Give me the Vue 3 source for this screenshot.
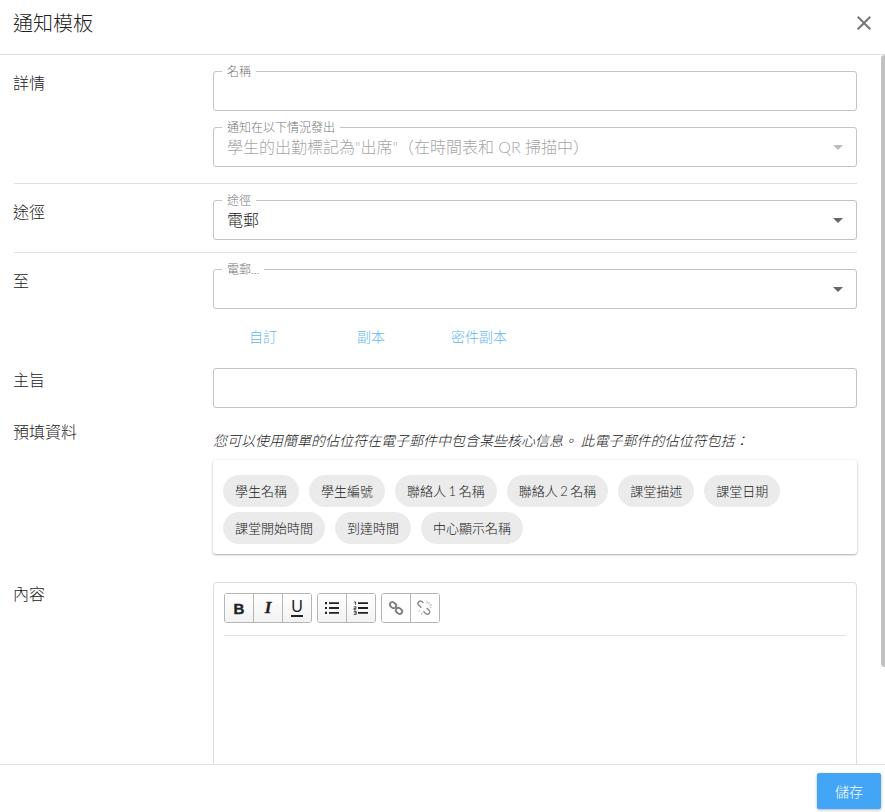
<script setup>
const chips = ['學生名稱', '學生編號', '聯絡人 1 名稱', '聯絡人 2 名稱', '課堂描述', '課堂日期', '課堂開始時間', '到達時間', '中心顯示名稱']
const links = ['自訂', '副本', '密件副本']
</script>

<template>
  <div class="dialog" lang="zh-TW">
    <header class="head">
      <h1>通知模板</h1>
      <svg class="close" width="24" height="24" viewBox="0 0 24 24">
        <path d="M19 6.41 17.59 5 12 10.59 6.41 5 5 6.41 10.59 12 5 17.59 6.41 19 12 13.41 17.59 19 19 17.59 13.41 12z" />
      </svg>
    </header>

    <main class="body">
      <section class="row first has-field">
        <div class="label">詳情</div>
        <div class="col">
          <fieldset class="field">
            <legend>名稱</legend>
          </fieldset>
          <fieldset class="field disabled">
            <legend>通知在以下情況發出</legend>
            <span class="value">學生的出勤標記為"出席"（在時間表和 QR 掃描中）</span>
            <i class="caret"></i>
          </fieldset>
        </div>
      </section>
      <hr />

      <section class="row has-field">
        <div class="label">途徑</div>
        <div class="col">
          <fieldset class="field">
            <legend>途徑</legend>
            <span class="value">電郵</span>
            <i class="caret"></i>
          </fieldset>
        </div>
      </section>
      <hr class="tight" />

      <section class="row has-field">
        <div class="label">至</div>
        <div class="col">
          <fieldset class="field">
            <legend>電郵...</legend>
            <i class="caret"></i>
          </fieldset>
          <div class="links">
            <a v-for="l in links" :key="l">{{ l }}</a>
          </div>
        </div>
      </section>

      <section class="row subject">
        <div class="label">主旨</div>
        <div class="col">
          <div class="plain-input"></div>
        </div>
      </section>

      <section class="row prefill">
        <div class="label">預填資料</div>
        <div class="col">
          <p class="hint">您可以使用簡單的佔位符在電子郵件中包含某些核心信息。 此電子郵件的佔位符包括：</p>
          <div class="card">
            <span v-for="c in chips" :key="c" class="chip">{{ c }}</span>
          </div>
        </div>
      </section>

      <section class="row content">
        <div class="label">內容</div>
        <div class="col">
          <div class="editor">
            <div class="toolbar">
              <div class="group">
                <button class="b">B</button>
                <button class="i">I</button>
                <button class="u"><span>U</span></button>
              </div>
              <div class="group">
                <button>
                  <svg width="16" height="14" viewBox="0 0 16 14">
                    <path d="M5 2.2h10M5 7h10M5 11.8h10" stroke="#222" stroke-width="1.8" />
                    <path d="M1 2.2h2M1 7h2M1 11.8h2" stroke="#222" stroke-width="2.2" />
                  </svg>
                </button>
                <button>
                  <svg width="16" height="14" viewBox="0 0 16 14">
                    <path d="M5 2.2h10M5 7h10M5 11.8h10" stroke="#222" stroke-width="1.8" />
                    <path d="M1 1h1.6v2.8M.8 5.8h2.2v1.6H1v1.4h2.2M.8 10.4h2.4v3H.8M1.4 11.9h1.8" fill="none" stroke="#222" stroke-width=".8" />
                  </svg>
                </button>
              </div>
              <div class="group">
                <button>
                  <svg width="16" height="16" viewBox="0 0 16 16" fill="none" stroke="#7a7a7a" stroke-width="1.8">
                    <rect x="1.6" y="2.6" width="6.8" height="5" rx="2.5" transform="rotate(40 5 5.1)" />
                    <rect x="7.6" y="8.4" width="6.8" height="5" rx="2.5" transform="rotate(40 11 10.9)" />
                  </svg>
                </button>
                <button>
                  <svg width="16" height="16" viewBox="0 0 16 16" fill="none" stroke="#8c8c8c" stroke-width="1.5">
                    <path d="M6.4 2.8 5 1.7a2.4 2.4 0 0 0-3.2 3.6l2.6 2.3" />
                    <path d="M9.6 8.2l2.2 1.8a2.4 2.4 0 0 1-.2 3.8 2.4 2.4 0 0 1-2.9-.3L6.4 11.2" />
                    <path d="M10 1v2.6M12.6 2l-1.4 2M15 5h-2.8M14.4 7.6l-2-.8M3 10.5l-1.6 1M5 12.6 4.4 15" stroke="#b0b0b0" stroke-width=".9" />
                  </svg>
                </button>
              </div>
            </div>
            <div class="area"></div>
          </div>
        </div>
      </section>

      <div class="thumb"></div>
    </main>

    <footer class="foot">
      <button class="save">儲存</button>
    </footer>
  </div>
</template>

<style>
html, body { margin: 0; background: #fff; }
</style>

<style scoped>
.dialog {
  width: 885px;
  height: 812px;
  display: flex;
  flex-direction: column;
  overflow: hidden;
  background: #fff;
  color: #212121;
  font-family: Lato, "Noto Sans CJK TC", sans-serif;
  font-weight: 300;
  text-spacing-trim: space-all;
}

.head {
  height: 55px;
  flex: none;
  display: flex;
  align-items: center;
  justify-content: space-between;
  padding: 0 9px 9px 13px;
  box-sizing: border-box;
  border-bottom: 1px solid #e0e0e0;
}

.head h1 {
  margin: 0;
  font-size: 20px;
  font-weight: 300;
  line-height: 32px;
}

.close {
  fill: #757575;
  width: 24px;
  height: 24px;
}

.body {
  position: relative;
  flex: 1;
  min-height: 0;
  overflow: hidden;
}

.thumb {
  position: absolute;
  top: 0;
  right: 0;
  width: 4px;
  height: 612px;
  background: #c1c1c1;
  border-radius: 4px 0 0 4px;
}

hr {
  margin: 16px 28px 11px 14px;
  border: 0;
  border-top: 1px solid #e0e0e0;
}

hr.tight {
  margin: 12px 28px 11px 14px;
}

.row {
  display: flex;
  padding: 0 28px 0 13px;
}

.row.first {
  padding-top: 11px;
}

.label {
  width: 200px;
  flex: none;
  font-size: 16px;
  line-height: 24px;
}

.has-field .label {
  padding-top: 5px;
}

.col {
  flex: 1;
  min-width: 0;
  display: flex;
  flex-direction: column;
  gap: 11px;
}

.field {
  position: relative;
  margin: 0;
  height: 45px;
  box-sizing: border-box;
  padding: 0 13px;
  border: 1px solid #c4c4c4;
  border-radius: 3px;
  font-size: 16px;
}

.field legend {
  padding: 0 5px;
  margin-left: -5px;
  font-size: 12px;
  line-height: 11px;
  height: 11px;
  color: #757575;
}

.value {
  display: block;
  line-height: 24px;
  margin-top: 2px;
}

.disabled .value {
  color: #a6a6a6;
}

.caret {
  position: absolute;
  right: 13px;
  top: 12px;
  width: 0;
  height: 0;
  border-left: 5px solid transparent;
  border-right: 5px solid transparent;
  border-top: 5px solid #666;
}

.disabled .caret {
  border-top-color: #bdbdbd;
}

.links {
  display: flex;
  height: 36px;
  margin-top: -2px;
  align-items: center;
}

.links a {
  width: 100px;
  text-align: center;
  font-size: 14px;
  color: #64b5f6;
}

.links a:nth-child(2) {
  margin-left: 8px;
}

.links a:last-child {
  width: 116px;
}

.subject {
  padding-top: 14px;
}

.plain-input {
  height: 40px;
  box-sizing: border-box;
  border: 1px solid #c4c4c4;
  border-radius: 3px;
}

.prefill {
  padding-top: 12px;
}

.prefill .col {
  gap: 9px;
}

.hint {
  margin: 0;
  font-size: 14px;
  line-height: 21px;
  font-style: italic;
  padding-top: 10px;
}

.card {
  display: flex;
  flex-wrap: wrap;
  gap: 5px 10px;
  padding: 15px 10px 10px;
  height: 94px;
  box-sizing: border-box;
  align-content: flex-start;
  border-radius: 3px;
  box-shadow: 0 1px 2px rgba(0, 0, 0, 0.3), 0 0 4px rgba(0, 0, 0, 0.06);
}

.chip {
  height: 32px;
  line-height: 32px;
  padding: 0 12px;
  border-radius: 16px;
  background: #ebebeb;
  font-size: 13px;
  word-spacing: -1px;
}

.content {
  padding-top: 28px;
}

.editor {
  height: 400px;
  box-sizing: border-box;
  border: 1px solid #ddd;
  border-radius: 4px;
  padding: 10px;
}

.toolbar {
  display: flex;
  gap: 5px;
  padding-bottom: 12px;
  border-bottom: 1px solid #e0e0e0;
}

.group {
  display: flex;
  height: 30px;
  box-sizing: border-box;
  border: 1px solid #b5b5b5;
  border-radius: 3px;
  overflow: hidden;
}

.group button {
  width: 29px;
  height: 28px;
  padding: 0;
  border: 0;
  border-left: 1px solid #b5b5b5;
  background: linear-gradient(#fff, #f2f2f2);
  display: flex;
  align-items: center;
  justify-content: center;
  font-size: 14px;
  color: #222;
}

.group:last-child button {
  background: #fff;
}

.group button:first-child {
  border-left: 0;
  width: 28px;
}

.b {
  font-family: "Liberation Sans", sans-serif;
  font-weight: 700;
  font-size: 15px !important;
  -webkit-text-stroke: 0.4px #222;
}

.i {
  font-family: "Liberation Serif", serif;
  font-weight: 700;
  font-style: italic;
  font-size: 17px !important;
  -webkit-text-stroke: 0.3px #222;
}

.u {
  font-family: "Liberation Sans", sans-serif;
  font-size: 16px !important;
}

.u span {
  display: block;
  line-height: 14px;
  padding-bottom: 1px;
  border-bottom: 2px solid #222;
}

.foot {
  height: 48px;
  flex: none;
  box-sizing: border-box;
  border-top: 1px solid #e0e0e0;
  display: flex;
  justify-content: flex-end;
  align-items: center;
  padding: 0 4px 0 0;
}

.save {
  width: 64px;
  height: 36px;
  margin-top: 5px;
  border: 0;
  border-radius: 2px;
  background: #42a5f5;
  color: #fff;
  font-family: inherit;
  font-weight: 300;
  font-size: 14px;
  box-shadow: 0 1px 3px rgba(0, 0, 0, 0.3);
}
</style>
